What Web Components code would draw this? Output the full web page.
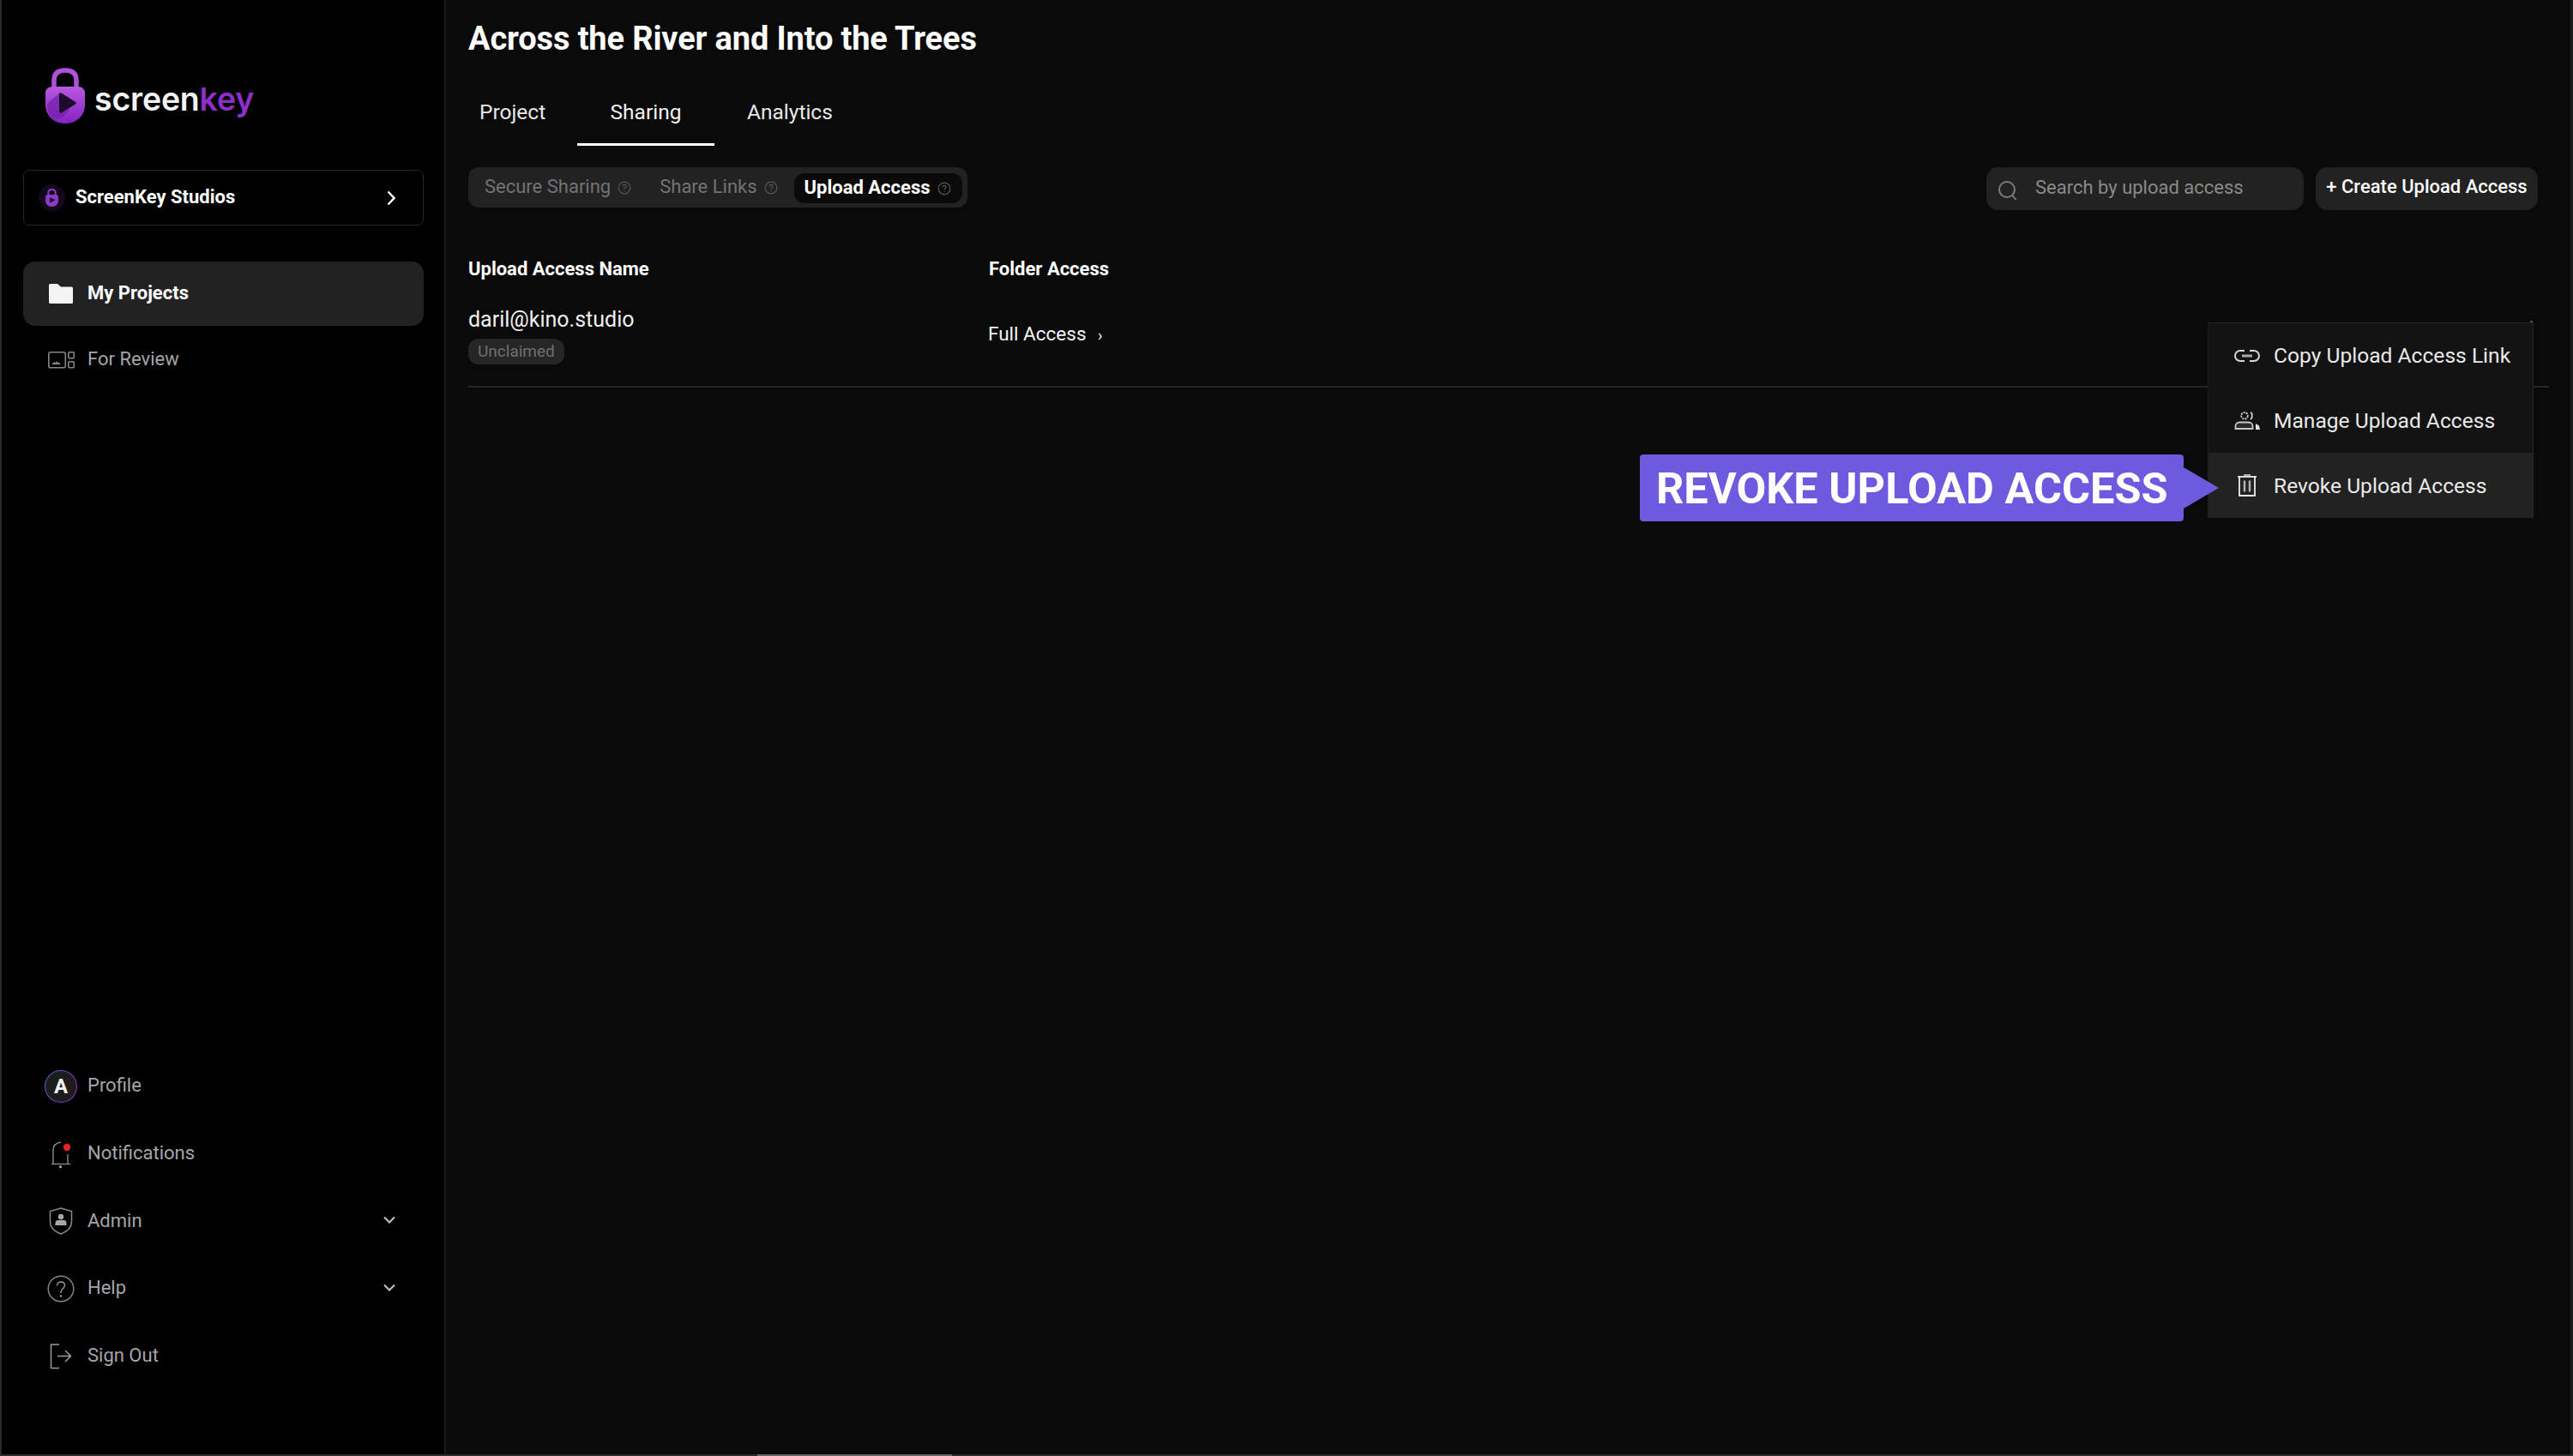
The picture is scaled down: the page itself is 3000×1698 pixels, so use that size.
<!DOCTYPE html>
<html>
<head>
<meta charset="utf-8">
<title>ScreenKey</title>
<style>
  html, body { margin: 0; padding: 0; height: 100%; background: #000; }
  body { font-family: Roboto, "Liberation Sans", sans-serif; color: #fff; overflow: hidden; }
</style>
</head>
<body>
<sk-app>
  <sk-sidebar slot="side"></sk-sidebar>
  <sk-main slot="main"></sk-main>
</sk-app>

<script>
const icons = {
  folder: `<svg width="28" height="23" viewBox="0 0 28 23"><path fill="#f4f4f4" d="M1.500 0h8.500l4 3.500h12.500a1.500 1.500 0 0 1 1.500 1.500v16.500a1.500 1.500 0 0 1-1.500 1.500h-25A1.500 1.500 0 0 1 0 21.500V1.500A1.500 1.500 0 0 1 1.500 0z"/></svg>`,
  review: `<svg width="31" height="20" viewBox="0 0 31 20" fill="none" stroke="#858585" stroke-width="1.600"><rect x=".8" y=".8" width="19.500" height="18" rx="2"/><path fill="#8a8a8a" stroke="none" d="M4.500 15l2.500-3 1.500 1.500 1.500-2.500 1.500 2.500 1-1 2.500 2.500z"/><rect x="23.800" y=".8" width="6.500" height="7" rx="1.300"/><rect x="23.800" y="11.800" width="6.500" height="7" rx="1.300"/></svg>`,
  bell: `<svg width="26" height="34" viewBox="0 0 26 34" fill="none" stroke="#8a8a8a" stroke-width="1.400"><path d="M4 28V12C4 7 7.500 4 13 3"/><path d="M21 17v11"/><path d="M2 28.500h22"/><circle cx="12.500" cy="31.800" r="1.500" fill="#bbb" stroke="none"/><circle cx="20" cy="9" r="4.200" fill="#e8222a" stroke="none"/></svg>`,
  shield: `<svg width="28" height="32" viewBox="0 0 28 32" fill="none"><path stroke="#8a8a8a" stroke-width="1.500" d="M14 1l12.500 3.500V17c0 7-6 11.500-12.500 14C7.500 28.500 1.500 24 1.500 17V4.500z"/><circle cx="14" cy="11" r="3.200" fill="#a8a8a8"/><path fill="#a8a8a8" d="M7.500 21v-3c0-2 1.500-3 3-3h7c1.500 0 3 1 3 3v3z"/></svg>`,
  help: `<svg width="32" height="32" viewBox="0 0 32 32" fill="none" stroke="#8a8a8a" stroke-width="1.400"><circle cx="16" cy="16" r="14.800"/><path stroke="#9a9a9a" d="M11.500 12.500c0-3 2-4.500 4.500-4.500s4.500 1.600 4.500 4c0 3.500-4.500 4-4.500 7.500v1.500"/><circle cx="16" cy="24.500" r="1.300" fill="#9a9a9a" stroke="none"/></svg>`,
  signout: `<svg width="26" height="30" viewBox="0 0 26 30" fill="none" stroke="#9a9a9a" stroke-width="1.500"><path d="M11 1H1.500v27.500H11"/><path d="M9 14.500h15.500M18 8l6.500 6.500L18 21"/></svg>`,
  chevDown: `<svg width="14" height="9" viewBox="0 0 14 9" fill="none" stroke="#c4c4c4" stroke-width="2" style="display:block;margin-top:-3px"><path d="M1 1.500l6 6 6-6"/></svg>`,
  chevRight: `<svg width="10" height="18" viewBox="0 0 10 18" fill="none" stroke="#fff" stroke-width="2.400"><path d="M1.500 1.500L8.500 9l-7 7.500"/></svg>`,
  q: `<svg width="16" height="16" viewBox="0 0 16 16" fill="none" stroke="currentColor" stroke-width="1.200"><circle cx="8" cy="8" r="6.800"/><path d="M6 6.300C6 5 7 4.300 8 4.300s2 .7 2 1.900c0 1.500-2 1.700-2 3.200"/><circle cx="8" cy="11.600" r=".7" fill="currentColor" stroke="none"/></svg>`,
  search: `<svg width="24" height="26" viewBox="0 0 24 26" fill="none" stroke="#7c7c7c" stroke-width="2"><circle cx="11" cy="12" r="9"/><path d="M17.500 19l4 5"/></svg>`,
  link: `<svg width="30" height="14" viewBox="0 0 30 14" fill="none" stroke="#d6d6d6" stroke-width="2"><path d="M12 1H7a6 6 0 0 0 0 12h5"/><path d="M18 1h5a6 6 0 0 1 0 12h-5"/><path stroke="#a8a8a8" stroke-width="3" d="M9 7h12"/></svg>`,
  people: `<svg width="30" height="21" viewBox="0 0 30 21" fill="none" stroke="#c8c8c8" stroke-width="1.800"><circle cx="12" cy="4.800" r="3.800" stroke-dasharray="2.200 1"/><path d="M19 .8c2.500 1 2.500 7 0 8"/><path d="M1.500 20v-3c0-2.500 2-4.500 4.500-4.500h11c2.500 0 4.500 2 4.500 4.500v3z" fill="#2a2a2a"/><path fill="#e4e4e4" stroke="none" d="M25 14l4 2.500 1 4.500h-5z"/></svg>`,
  trash: `<svg width="24" height="26" viewBox="0 0 24 26" fill="none" stroke="#eee" stroke-width="1.800"><path d="M1 3h22"/><path stroke="#aaa" stroke-width="2" d="M8 1h8"/><path d="M3 3v22h18V3"/><path stroke="#b4b4b4" stroke-width="2.400" d="M9 7.500v13M15 7.500v13"/></svg>`
};

// barra lateral
class SkLogo extends HTMLElement {
  constructor() {
    super();
    this.attachShadow({ mode: "open" });
    this.shadowRoot.innerHTML = `
      <style>
        :host { display: flex; align-items: center; gap: 11px; }
        .word { font: 600 37.5px/1 "Inter", sans-serif; letter-spacing: -0.2px; color: #f4f4f4; margin-top: 8px; }
        .word span { color: #8e2fc9; }
      </style>
      <svg width="46" height="65" viewBox="0 0 46 65">
        <defs><linearGradient id="g" x1="0" y1="0" x2="0" y2="1"><stop offset="0" stop-color="#b959e0"/><stop offset="1" stop-color="#8422c4"/></linearGradient></defs>
        <path fill="none" stroke="#b04fdc" stroke-width="5.500" d="M10 26V14.500C10 6.500 15 3 23 3s13 3.500 13 11.500V26"/>
        <path fill="url(#g)" d="M8 22h30c4 0 8 3 8 7v14c0 13-10 22-23 22S0 56 0 43V29c0-4 4-7 8-7z"/>
        <path fill="#6f1fa3" opacity=".65" d="M17 29L2 42c0 9 2 13 8 18l10-2 8-9z"/>
        <path fill="#1e0a2c" d="M16 31c0-1.500 1.500-2 2.500-1.500L35 40c1 .6 1 1.900 0 2.500L18.500 52.500c-1 .5-2.500 0-2.500-1.500z"/>
      </svg>
      <div class="word">screen<span>key</span></div>
    `;
  }
}
customElements.define("sk-logo", SkLogo);

class SkWorkspace extends HTMLElement {
  constructor() {
    super();
    this.attachShadow({ mode: "open" });
    this.shadowRoot.innerHTML = `
      <style>
        :host { display: flex; align-items: center; height: 65px; box-sizing: border-box; border: 1.500px solid #262626; border-radius: 7px; padding: 0 32px 0 17px; }
        .badge { width: 31px; height: 31px; border-radius: 50%; background: #120a1c; display: flex; align-items: center; justify-content: center; margin-right: 12px; }
        .name { flex: 1; font-size: 22px; font-weight: 700; color: #fff; margin-top: -3px; }
      </style>
      <div class="badge">
        <svg width="15" height="21" viewBox="0 0 46 65"><path fill="none" stroke="#8a3bc4" stroke-width="6" d="M10 26V14C10 7 15 3 23 3s13 4 13 11v12"/><path fill="#8a3bc4" d="M8 22h30c4 0 8 3 8 7v14c0 13-10 22-23 22S0 56 0 43V29c0-4 4-7 8-7z"/><path fill="#1e0a2c" d="M16 32l19 9-19 10z"/></svg>
      </div>
      <div class="name"><slot></slot></div>
      ${icons.chevRight}
    `;
  }
}
customElements.define("sk-workspace", SkWorkspace);

class SkNavItem extends HTMLElement {
  constructor() {
    super();
    this.attachShadow({ mode: "open" });
    this.shadowRoot.innerHTML = `
      <style>
        :host { display: flex; align-items: center; height: var(--row, 79px); padding: 0 33px 0 27px; font-size: 22px; color: #a6a6a6; }
        :host([active]) { background: #222; border-radius: 14px; color: #fff; font-weight: 700; height: 75px; }
        .ic { width: 34px; display: flex; justify-content: center; margin-right: 14px; flex: none; }
        .tx { flex: 1; margin-top: -2px; }
      </style>
      <div class="ic"><slot name="icon"></slot></div>
      <div class="tx"><slot></slot></div>
      <slot name="end"></slot>
    `;
  }
}
customElements.define("sk-nav-item", SkNavItem);

class SkAvatar extends HTMLElement {
  constructor() {
    super();
    this.attachShadow({ mode: "open" });
    this.shadowRoot.innerHTML = `
      <style>
        :host { display: flex; align-items: center; justify-content: center; width: 38px; height: 38px; box-sizing: border-box; border-radius: 50%; background: linear-gradient(#1c1c1c,#1c1c1c) padding-box, linear-gradient(100deg,#4a6fd0,#9a2fd0) border-box; border: 1.500px solid transparent; font-size: 24px; font-weight: 700; color: #f2f2f2; }
      </style><slot></slot>
    `;
  }
}
customElements.define("sk-avatar", SkAvatar);

class SkSidebar extends HTMLElement {
  constructor() {
    super();
    this.attachShadow({ mode: "open" });
    this.shadowRoot.innerHTML = `
      <style>
        :host { display: flex; flex-direction: column; height: 100%; box-sizing: border-box; padding: 79px 24px 75px 25px; background: #000; border-right: 2px solid #1b1b1b; border-left: 2px solid #2a2a2a; }
        sk-logo { margin: 0 0 54px 26px; }
        sk-workspace { margin-bottom: 42px; }
        .gap { flex: 1; }
        .low { --row: 78.700px; }
        span[slot=icon] { display: flex; }
      </style>
      <sk-logo></sk-logo>
      <sk-workspace>ScreenKey Studios</sk-workspace>
      <sk-nav-item active><span slot="icon">${icons.folder}</span>My Projects</sk-nav-item>
      <sk-nav-item><span slot="icon">${icons.review}</span>For Review</sk-nav-item>
      <div class="gap"></div>
      <div class="low">
        <sk-nav-item><span slot="icon"><sk-avatar>A</sk-avatar></span>Profile</sk-nav-item>
        <sk-nav-item><span slot="icon">${icons.bell}</span>Notifications</sk-nav-item>
        <sk-nav-item><span slot="icon">${icons.shield}</span>Admin<span slot="end">${icons.chevDown}</span></sk-nav-item>
        <sk-nav-item><span slot="icon">${icons.help}</span>Help<span slot="end">${icons.chevDown}</span></sk-nav-item>
        <sk-nav-item><span slot="icon">${icons.signout}</span>Sign Out</sk-nav-item>
      </div>
    `;
  }
}
customElements.define("sk-sidebar", SkSidebar);

// area principal
class SkTabs extends HTMLElement {
  constructor() {
    super();
    this.attachShadow({ mode: "open" });
    this.shadowRoot.innerHTML = `
      <style>
        :host { display: flex; height: 75px; font-size: 24.500px; color: #e8e8e8; }
        div { display: flex; align-items: center; justify-content: center; box-sizing: border-box; padding: 0 0 2px 38px; border-bottom: 3px solid transparent; }
        .first { width: 127px; justify-content: flex-start; padding-left: 13px; }
        .on { width: 160px; padding-left: 0; border-bottom-color: #fff; color: #f2f2f2; }
      </style>
      <div class="first">Project</div><div class="on">Sharing</div><div>Analytics</div>
    `;
  }
}
customElements.define("sk-tabs", SkTabs);

class SkSegment extends HTMLElement {
  constructor() {
    super();
    this.attachShadow({ mode: "open" });
    this.shadowRoot.innerHTML = `
      <style>
        :host { display: inline-flex; align-items: center; height: 47px; box-sizing: border-box; background: #222; border-radius: 12px; padding: 0 6px 0 19px; font-size: 22px; color: #737373; }
        .i { display: flex; align-items: center; gap: 8px; margin-top: -2px; }
        .i svg { margin-top: 2px; color: #565656; }
        .a { background: #0a0a0a; color: #fff; font-weight: 700; height: 35px; padding: 0 13px 0 12px; border-radius: 12px; margin: 2px 0 0 19px; padding-bottom: 2px; box-sizing: border-box; }
        .b { margin-left: 33px; }
      </style>
      <div class="i">Secure Sharing ${icons.q}</div>
      <div class="i b">Share Links ${icons.q}</div>
      <div class="i a">Upload Access ${icons.q}</div>
    `;
  }
}
customElements.define("sk-segment", SkSegment);

class SkSearch extends HTMLElement {
  constructor() {
    super();
    this.attachShadow({ mode: "open" });
    this.shadowRoot.innerHTML = `
      <style>
        :host { display: flex; align-items: center; width: 370px; height: 50px; box-sizing: border-box; background: #222; border-radius: 14px; padding: 0 0 3px 13px; font-size: 22px; color: #8a8a8a; }
        svg { margin: 7px 20px 0 0; }
      </style>
      ${icons.search}<slot></slot>
    `;
  }
}
customElements.define("sk-search", SkSearch);

class SkButton extends HTMLElement {
  constructor() {
    super();
    this.attachShadow({ mode: "open" });
    this.shadowRoot.innerHTML = `
      <style>
        :host { display: flex; align-items: center; justify-content: center; width: 259px; height: 50px; background: #222; border-radius: 14px; font-size: 22px; font-weight: 500; color: #fff; padding-bottom: 5px; box-sizing: border-box; white-space: nowrap; }
      </style>
      <slot></slot>
    `;
  }
}
customElements.define("sk-button", SkButton);

class SkMenuItem extends HTMLElement {
  constructor() {
    super();
    this.attachShadow({ mode: "open" });
    this.shadowRoot.innerHTML = `
      <style>
        :host { display: flex; align-items: center; height: 75.700px; padding-left: 30px; font-size: 24.600px; color: #e9e9e9; }
        :host([hot]) { background: #222; }
        .ic { width: 30px; display: flex; justify-content: center; margin-right: 16px; }
      </style>
      <div class="ic"><slot name="icon"></slot></div><slot></slot>
    `;
  }
}
customElements.define("sk-menu-item", SkMenuItem);

class SkMenu extends HTMLElement {
  constructor() {
    super();
    this.attachShadow({ mode: "open" });
    this.shadowRoot.innerHTML = `
      <style>
        :host { position: absolute; left: 2574px; top: 376px; width: 380px; box-sizing: border-box; background: #131313; border-top: 1.500px solid #262626; border-left: 1.500px solid #1c1c1c; border-right: 1.500px solid #262626; }
        span[slot=icon] { display: flex; }
        i { position: absolute; right: 0; top: -3px; width: 3px; height: 2px; background: #4a4a4a; }
      </style>
      <i></i>
      <sk-menu-item><span slot="icon">${icons.link}</span>Copy Upload Access Link</sk-menu-item>
      <sk-menu-item><span slot="icon">${icons.people}</span>Manage Upload Access</sk-menu-item>
      <sk-menu-item hot><span slot="icon">${icons.trash}</span>Revoke Upload Access</sk-menu-item>
    `;
  }
}
customElements.define("sk-menu", SkMenu);

class SkCallout extends HTMLElement {
  constructor() {
    super();
    this.attachShadow({ mode: "open" });
    this.shadowRoot.innerHTML = `
      <style>
        :host { position: absolute; left: 1912px; top: 530px; width: 634px; height: 78px; box-sizing: border-box; background: #6e5ade; border-radius: 4px; display: flex; align-items: center; padding-left: 19px; font-size: 50.500px; font-weight: 700; color: #fff; white-space: nowrap; }
        i { position: absolute; left: 634px; top: 15px; border-left: 41px solid #6e5ade; border-top: 24px solid transparent; border-bottom: 24px solid transparent; }
      </style>
      <slot></slot><i></i>
    `;
  }
}
customElements.define("sk-callout", SkCallout);

class SkMain extends HTMLElement {
  constructor() {
    super();
    this.attachShadow({ mode: "open" });
    this.shadowRoot.innerHTML = `
      <style>
        :host { display: block; height: 100%; box-sizing: border-box; background: #0a0a0a; padding: 20px 25px 0 26px; border-right: 3px solid #1c1c1c; }
        h1 { margin: 0 0 25px; font-size: 38px; line-height: 50px; font-weight: 700; color: #fff; letter-spacing: -0.14px; }
        .bar { display: flex; align-items: flex-start; gap: 14px; margin: 25px 13px 0 0; }
        .bar sk-segment { margin-right: auto; }
        .hd, .row { display: grid; grid-template-columns: 607px 1fr; }
        .hd { margin-top: 56px; font-size: 22px; font-weight: 700; height: 26px; line-height: 26px; }
        .row { margin-top: 31px; height: 94px; box-sizing: border-box; border-bottom: 2px solid #262626; align-items: start; }
        .mail { font-size: 25px; line-height: 30px; color: #f0f0f0; }
        .pill { display: block; width: fit-content; margin-top: 7px; font-size: 19px; line-height: 30px; padding: 0 11px; border-radius: 12px; background: #262626; color: #707070; }
        .acc { font-size: 22.500px; line-height: 26px; font-weight: 400; margin: 18px 0 0 -1px; color: #f4f4f4; }
        .acc b { font-weight: 400; margin-left: 8px; font-size: 18px; }
      </style>
      <h1>Across the River and Into the Trees</h1>
      <sk-tabs></sk-tabs>
      <div class="bar">
        <sk-segment></sk-segment>
        <sk-search>Search by upload access</sk-search>
        <sk-button>+ Create Upload Access</sk-button>
      </div>
      <div class="hd"><div>Upload Access Name</div><div>Folder Access</div></div>
      <div class="row">
        <div><div class="mail">daril@kino.studio</div><span class="pill">Unclaimed</span></div>
        <div class="acc">Full Access <b>›</b></div>
      </div>
      <sk-menu></sk-menu>
      <sk-callout>REVOKE UPLOAD ACCESS</sk-callout>
    `;
  }
}
customElements.define("sk-main", SkMain);

class SkApp extends HTMLElement {
  constructor() {
    super();
    this.attachShadow({ mode: "open" });
    this.shadowRoot.innerHTML = `
      <style>
        :host { display: grid; grid-template-columns: 520px 1fr; grid-template-rows: 1696px 2px; height: 1698px; width: 3000px; overflow: hidden; }
        .track { grid-column: 1 / 3; background: #2c2c2c; }
        .thumb { margin-left: 883px; width: 227px; height: 2px; background: #666; }
      </style>
      <slot name="side"></slot><slot name="main"></slot>
      <div class="track"><div class="thumb"></div></div>
    `;
  }
}
customElements.define("sk-app", SkApp);
</script>
</body>
</html>
